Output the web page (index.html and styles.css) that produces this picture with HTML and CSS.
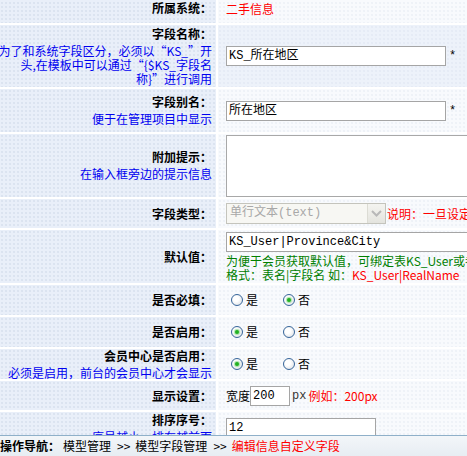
FILE: index.html
```html
<!DOCTYPE html>
<html lang="zh-CN">
<head>
<meta charset="utf-8">
<title>编辑信息自定义字段</title>
<link rel="stylesheet" href="styles.css">
</head>
<body>
<div class="form">
  <div class="lbl"><b class="name">所属系统：</b></div>
  <div class="val"><span class="red">二手信息</span></div>

  <div class="lbl"><b class="name has-hint">字段名称：</b><span class="hint">为了和系统字段区分，必须以“KS_”开<br>头,在模板中可以通过“{$KS_字段名<br>称}”进行调用</span></div>
  <div class="val val-hl"><div class="line"><span class="input w220">KS_所在地区</span><span class="star">*</span></div></div>

  <div class="lbl"><b class="name has-hint">字段别名：</b><span class="hint">便于在管理项目中显示</span></div>
  <div class="val"><div class="line"><span class="input w220">所在地区</span><span class="star">*</span></div></div>

  <div class="lbl"><b class="name has-hint">附加提示：</b><span class="hint">在输入框旁边的提示信息</span></div>
  <div class="val"><span class="textarea"></span></div>

  <div class="lbl"><b class="name">字段类型：</b></div>
  <div class="val"><div class="line">
    <span class="select"><span class="sel-text">单行文本(text)</span><span class="sel-btn"><svg width="11" height="7" viewBox="0 0 11 7"><path d="M1 1 L5.5 5.5 L10 1" fill="none" stroke="#b8b8b8" stroke-width="2"/></svg></span></span><span class="red note">说明：一旦设定不能修改</span>
  </div></div>

  <div class="lbl"><b class="name">默认值：</b></div>
  <div class="val">
    <span class="input w300">KS_User|Province&amp;City</span>
    <span class="green first">为便于会员获取默认值，可绑定表KS_User或者</span>
    <span class="green">格式：表名|字段名 如：<span class="red">KS_User|RealName</span></span>
  </div>

  <div class="lbl"><b class="name">是否必填：</b></div>
  <div class="val"><div class="line"><span class="radio"></span><span class="opt">是</span><span class="radio second on"></span><span class="opt">否</span></div></div>

  <div class="lbl"><b class="name">是否启用：</b></div>
  <div class="val"><div class="line"><span class="radio on"></span><span class="opt">是</span><span class="radio second"></span><span class="opt">否</span></div></div>

  <div class="lbl"><b class="name has-hint">会员中心是否启用：</b><span class="hint">必须是启用，前台的会员中心才会显示</span></div>
  <div class="val"><div class="line"><span class="radio on"></span><span class="opt">是</span><span class="radio second"></span><span class="opt">否</span></div></div>

  <div class="lbl"><b class="name">显示设置：</b></div>
  <div class="val"><div class="line"><span>宽度</span><span class="input w40">200</span><span class="unit">px</span><span class="red">例如：200px</span></div></div>

  <div class="lbl"><b class="name has-hint">排序序号：</b><span class="hint">序号越小，排在越前面</span></div>
  <div class="val"><span class="input w150">12</span></div>

  <div class="lbl"><b class="name">字段宽度：</b></div>
  <div class="val"><span class="input w40">0</span></div>
</div>

<div class="nav"><b class="nav-title">操作导航：</b><span>模型管理</span><span class="sep">&gt;&gt;</span><span>模型字段管理</span><span class="sep">&gt;&gt;</span><span class="red">编辑信息自定义字段</span></div>
</body>
</html>
```
FILE: styles.css
```css
html, body {
  margin: 0;
  padding: 0;
  overflow: hidden;
  background: #fff;
}
body {
  font-family: "Noto Sans CJK SC", "Noto Sans", sans-serif;
  font-size: 12px;
  color: #000;
  width: 467px;
  height: 456px;
  position: relative;
}
.form {
  display: grid;
  grid-template-columns: 216px 440px;
  grid-template-rows: 30px 62px 43px 63px 29px 53px 30px 30px 30px 29px 32px 30px;
  gap: 2px;
  margin-top: -7px;
  background: #fff;
  width: 658px;
}
.lbl {
  background-color: #e9eff9;
  background-image: radial-gradient(circle, rgba(170,185,210,0.35) 0.6px, transparent 0.9px);
  background-size: 4px 4px;
  display: flex;
  flex-direction: column;
  justify-content: center;
  align-items: flex-end;
  padding-right: 4px;
  text-align: right;
  white-space: nowrap;
}
.val {
  background-color: #f8fafd;
  background-image: radial-gradient(circle, rgba(190,200,220,0.25) 0.6px, transparent 0.9px);
  background-size: 4px 4px;
  display: flex;
  flex-direction: column;
  justify-content: center;
  align-items: flex-start;
  padding-left: 8px;
  white-space: nowrap;
}
.val-hl {
  background-color: #edf2fa;
}
.name {
  font-weight: bold;
  line-height: 14px;
}
.name.has-hint {
  margin-bottom: 3px;
}
.hint {
  color: #0000f0;
  line-height: 14px;
}
.red { color: #f00; }
.green {
  color: #008000;
  line-height: 14px;
}
.green.first { margin-top: 2px; }
.line {
  display: flex;
  align-items: center;
  line-height: 14px;
}
.input {
  box-sizing: border-box;
  height: 20px;
  border: 1px solid #a5a5a5;
  background: #fff;
  font-family: "Liberation Mono", "Noto Sans CJK SC", monospace;
  font-size: 12px;
  line-height: 18px;
  padding: 0 2px;
  overflow: hidden;
  display: block;
}
.w220 { width: 220px; }
.w300 { width: 300px; }
.w150 { width: 150px; }
.w40 { width: 40px; }
.star {
  margin-left: 3px;
  font-family: "Liberation Mono", monospace;
}
.textarea {
  display: block;
  box-sizing: border-box;
  width: 300px;
  height: 62px;
  border: 1px solid #a8a8a8;
  background: #fff;
}
.select {
  box-sizing: border-box;
  display: flex;
  width: 160px;
  height: 21px;
  border: 1px solid #c4c4bc;
  background: #f7f7f3;
  color: #a8a8a8;
  font-family: "Liberation Mono", "Noto Sans CJK SC", monospace;
}
.sel-text {
  flex: 1;
  padding-left: 3px;
  line-height: 19px;
}
.sel-btn {
  width: 17px;
  border-left: 1px solid #dcdcd4;
  background: linear-gradient(#f4f4f0, #e4e4de);
  display: flex;
  align-items: center;
  justify-content: center;
}
.note { margin-left: 1px; }
.radio {
  box-sizing: border-box;
  width: 12px;
  height: 12px;
  border-radius: 50%;
  border: 1px solid #36659a;
  background: radial-gradient(circle at 40% 40%, #ffffff 30%, #d5dae0 100%);
  margin-left: 5px;
  position: relative;
}
.radio.second { margin-left: 25px; }
.radio.on::after {
  content: "";
  position: absolute;
  left: 3px;
  top: 3px;
  width: 4px;
  height: 4px;
  border-radius: 50%;
  background: #22b022;
  box-shadow: 0 0 1px 1px rgba(80,200,80,0.5);
}
.opt { margin-left: 3px; }
.unit {
  margin-left: 2px;
  margin-right: 2px;
  color: #333;
  font-family: "Liberation Mono", monospace;
}
.nav {
  position: fixed;
  left: 0;
  right: 0;
  bottom: 0;
  height: 20px;
  border-top: 1px solid #8fb0c9;
  background: linear-gradient(#f3f6f9, #e7edf3);
  line-height: 20px;
  white-space: nowrap;
  display: flex;
}
.nav-title { margin-right: 3px; }
.sep { margin: 0 5px 0 6px; }
```
